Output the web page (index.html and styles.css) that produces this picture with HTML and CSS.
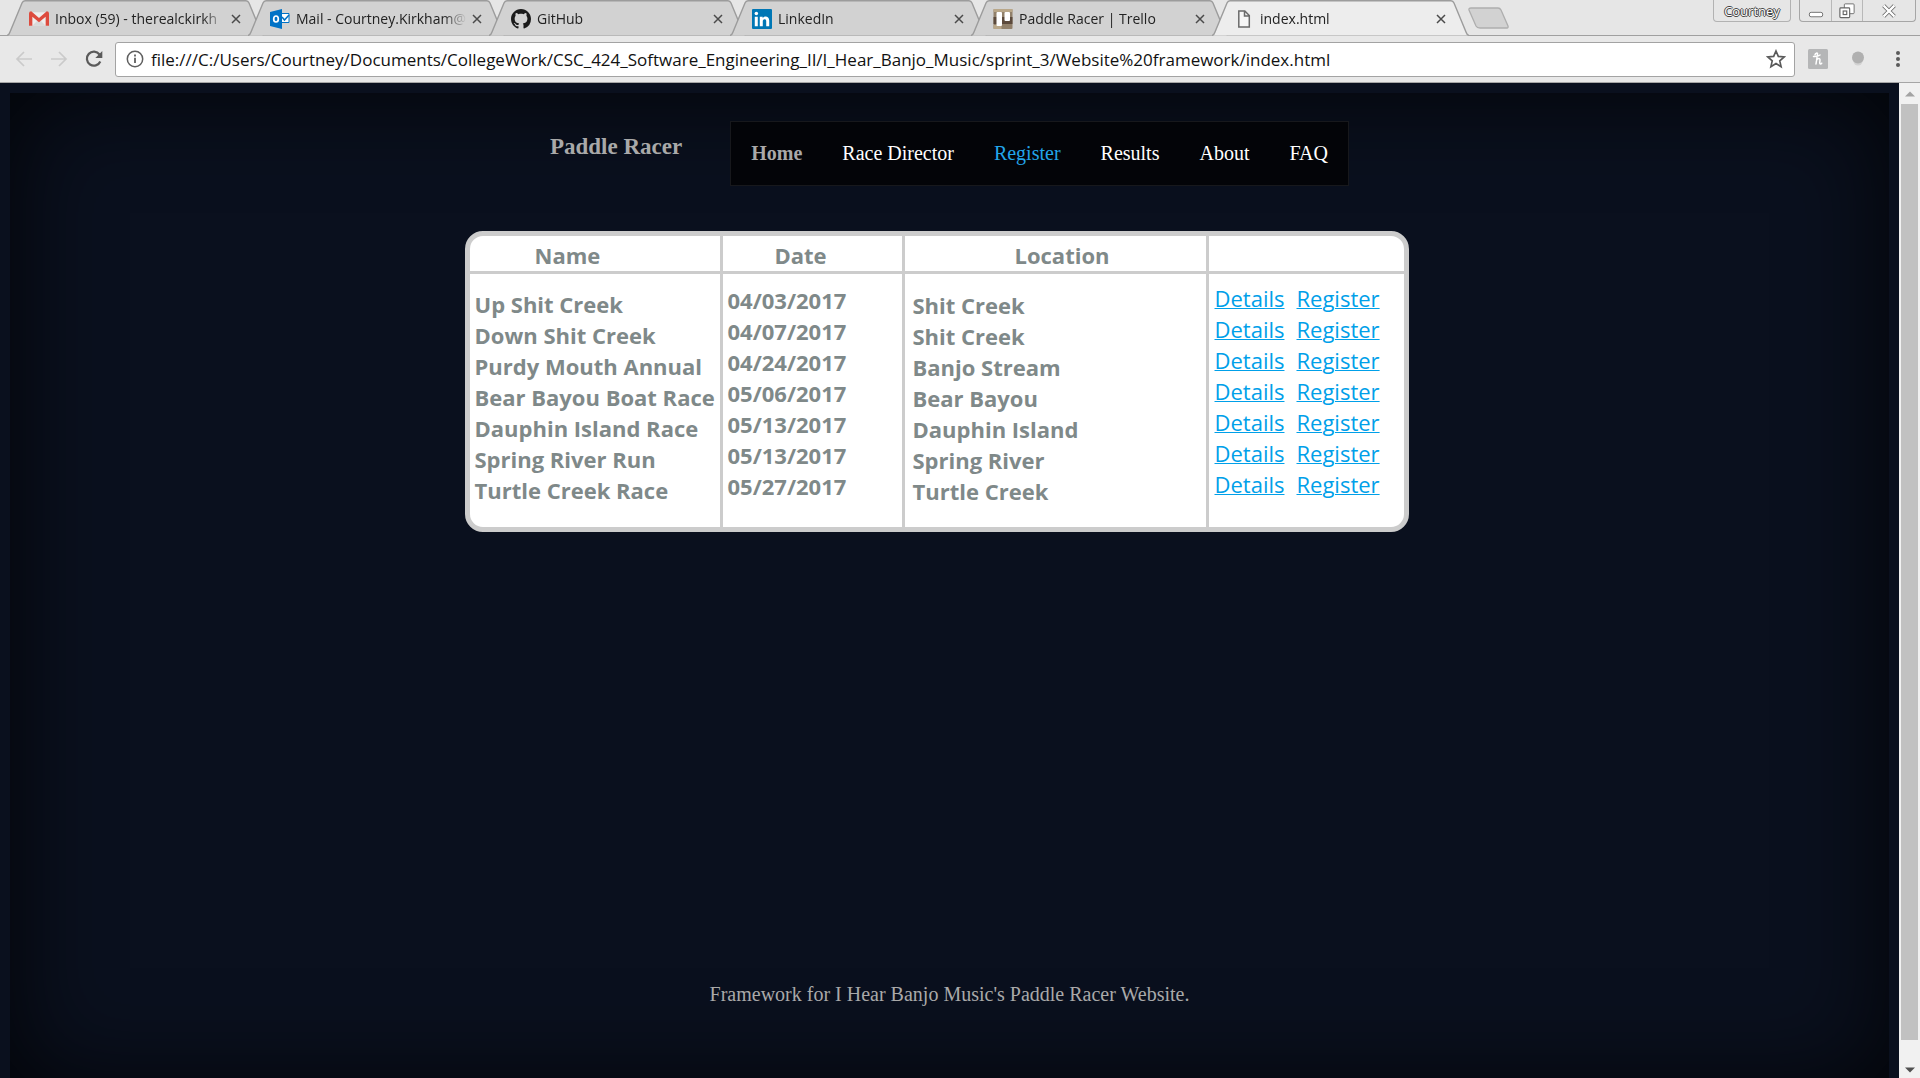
FILE: index.html
```html
<!DOCTYPE html>
<html lang="en">
<head>
<meta charset="utf-8">
<title>index.html</title>
<link rel="stylesheet" href="styles.css">
</head>
<body>
<svg class="defs" aria-hidden="true">
  <symbol id="tab-shape" viewBox="0 0 257 36" preserveAspectRatio="none">
    <path d="M0 35.5 Q2 35 3 32 L15 3 Q16 .7 18 .7 H239 Q241 .7 242 3 L254 32 Q255 35 257 35.5" stroke="#9c9c9c" stroke-width="1.4"/>
  </symbol>
  <symbol id="close" viewBox="0 0 10 10"><path d="M1 1l8 8M9 1L1 9" stroke="#4a4a4a" stroke-width="1.5"/></symbol>
</svg>

<header class="chrome">
  <div class="strip">
    <div class="tabs">
      <div class="tab">
        <svg class="shape"><use href="#tab-shape"/></svg>
        <svg class="icon" viewBox="0 0 18 18"><path fill="#eee" d="M1 3h16v12H1z"/><path fill="#d9d9d9" d="M3 15l6-6 6 6z"/><path fill="#dd4b3e" d="M0 4q0-2 2-2l7 6 7-6q2 0 2 2v11h-3V7l-6 5-6-5v8H0z"/></svg>
        <span class="title">Inbox (59) - therealckirkh</span>
        <button class="close" aria-label="Close tab"><svg><use href="#close"/></svg></button>
      </div>
      <div class="tab">
        <svg class="shape"><use href="#tab-shape"/></svg>
        <svg class="icon" viewBox="0 0 20 20"><path fill="#fff" stroke="#0072c6" d="M11 4.500h8v9h-8z"/><path d="M12 8l2.500 3L19 6" fill="none" stroke="#0072c6" stroke-width="1.500"/><path fill="#0072c6" d="M0 3l12-3v20L0 17z"/><ellipse cx="6" cy="10" rx="2.300" ry="3" fill="none" stroke="#fff" stroke-width="1.700"/></svg>
        <span class="title">Mail - Courtney.Kirkham@</span>
        <button class="close" aria-label="Close tab"><svg><use href="#close"/></svg></button>
      </div>
      <div class="tab">
        <svg class="shape"><use href="#tab-shape"/></svg>
        <svg class="icon" viewBox="0 0 16 16"><path fill="#1b1b1b" d="M8 0C3.580 0 0 3.580 0 8c0 3.540 2.290 6.530 5.470 7.590.4.070.55-.17.55-.38 0-.19-.01-.82-.01-1.490-2.010.37-2.530-.49-2.690-.94-.09-.23-.48-.94-.82-1.130-.28-.15-.68-.52-.01-.53.63-.01 1.080.58 1.230.82.72 1.210 1.870.87 2.330.66.07-.52.28-.87.51-1.070-1.780-.2-3.640-.89-3.640-3.950 0-.87.31-1.590.82-2.150-.08-.2-.36-1.020.08-2.120 0 0 .67-.21 2.200.82.64-.18 1.320-.27 2-.27s1.360.09 2 .27c1.530-1.040 2.200-.82 2.200-.82.44 1.100.16 1.920.08 2.120.51.56.82 1.270.82 2.150 0 3.070-1.870 3.750-3.650 3.950.29.25.54.73.54 1.480 0 1.070-.01 1.930-.01 2.200 0 .21.15.46.55.38A8 8 0 0 0 16 8c0-4.420-3.580-8-8-8z"/></svg>
        <span class="title">GitHub</span>
        <button class="close" aria-label="Close tab"><svg><use href="#close"/></svg></button>
      </div>
      <div class="tab">
        <svg class="shape"><use href="#tab-shape"/></svg>
        <svg class="icon" viewBox="0 0 18 18"><rect width="18" height="18" rx="1" fill="#0077b5"/><path fill="#fff" d="M2.500 7h2.700v8.500H2.500zM7 7h2.600v1.200c1.400-2.200 5.900-2 5.900 2.300v5h-2.700V11c0-2.500-3.100-2.300-3.100 0v4.500H7z"/><circle cx="3.900" cy="4" r="1.600" fill="#fff"/></svg>
        <span class="title">LinkedIn</span>
        <button class="close" aria-label="Close tab"><svg><use href="#close"/></svg></button>
      </div>
      <div class="tab">
        <svg class="shape"><use href="#tab-shape"/></svg>
        <svg class="icon" viewBox="0 0 19 20"><rect width="19" height="20" rx="1" fill="#91806a"/><path fill="#5c4a3c" d="M0 8h19v7H0z"/><path fill="#b9a789" d="M0 0h19v3H0zM0 16h8v4H0z"/><rect x="3" y="3" width="5.500" height="14" rx="1" fill="#fff"/><rect x="11" y="3" width="5.500" height="9" rx="1" fill="#fff"/></svg>
        <span class="title">Paddle Racer | Trello</span>
        <button class="close" aria-label="Close tab"><svg><use href="#close"/></svg></button>
      </div>
      <div class="tab active">
        <svg class="shape"><use href="#tab-shape"/></svg>
        <svg class="icon" viewBox="0 0 20 20"><path d="M4.800 2h6l4.500 4.500V18H4.800zM10.500 2v5h5" fill="#f6f6f6" stroke="#6a6a6a" stroke-width="1.500"/></svg>
        <span class="title">index.html</span>
        <button class="close" aria-label="Close tab"><svg><use href="#close"/></svg></button>
      </div>
      <button class="new-tab" aria-label="New tab"><svg viewBox="0 0 43 22"><path d="M4 1h27q2 0 3 2l7 16q.5 2-1 2H13q-3 0-4-2L2 3q-.500-2 2-2z" fill="#d2d2d2" stroke="#aeaeae" stroke-width="1.300"/></svg></button>
    </div>
    <div class="window-controls">
      <button class="profile">Courtney</button>
      <div class="control-group">
        <button class="control" aria-label="Minimize"><svg viewBox="0 0 18 18"><rect x="1.500" y="10.500" width="15" height="5" rx="2" fill="#fff" stroke="#666"/></svg></button>
        <button class="control" aria-label="Restore"><svg viewBox="0 0 18 18"><rect x="6" y="1" width="11" height="11" rx="1" fill="#fff" stroke="#666"/><rect x="1" y="5.500" width="11" height="11" rx="1" fill="#fff" stroke="#666" stroke-width="1.300"/><rect x="4.700" y="9" width="4" height="4" fill="#fff" stroke="#666" stroke-width="1.300"/></svg></button>
        <button class="control wide" aria-label="Close"><svg viewBox="0 0 18 18"><path d="M3 3l12 12M15 3L3 15" stroke="#666" stroke-width="4.500"/><path d="M3 3l12 12M15 3L3 15" stroke="#fff" stroke-width="2.600"/></svg></button>
      </div>
    </div>
  </div>

  <div class="toolbar">
    <button class="tool" aria-label="Back"><svg viewBox="0 0 18 18"><path d="M17 9H2M9 2L2 9l7 7" fill="none" stroke="#cacaca" stroke-width="1.700"/></svg></button>
    <button class="tool" aria-label="Forward"><svg viewBox="0 0 18 18"><path d="M1 9h15M9 2l7 7-7 7" fill="none" stroke="#cacaca" stroke-width="1.700"/></svg></button>
    <button class="tool" aria-label="Reload"><svg viewBox="0 0 18 18"><path d="M15.300 11.500A7 7 0 1 1 14.500 4.500" fill="none" stroke="#5a5a5a" stroke-width="2.200"/><path d="M17.300 1v7h-7z" fill="#5a5a5a"/></svg></button>
    <div class="omnibox">
      <svg class="info" viewBox="0 0 18 18"><circle cx="9" cy="9" r="7.700" fill="none" stroke="#5f5f5f" stroke-width="1.500"/><path d="M9 7.800v5.200M9 4.600v1.900" stroke="#5f5f5f" stroke-width="1.800"/></svg>
      <input class="url" type="text" aria-label="Address" value="file:///C:/Users/Courtney/Documents/CollegeWork/CSC_424_Software_Engineering_II/I_Hear_Banjo_Music/sprint_3/Website%20framework/index.html">
      <button class="star" aria-label="Bookmark"><svg viewBox="0 0 18 18"><path d="M9 1.800l2.100 4.900 5.300.5-4 3.500 1.200 5.200L9 13.100l-4.600 2.800 1.200-5.200-4-3.500 5.300-.5z" fill="none" stroke="#5a5a5a" stroke-width="1.500"/></svg></button>
    </div>
    <button class="tool ext" aria-label="Honey"><svg viewBox="0 0 20 20"><rect width="20" height="20" rx="1.500" fill="#b5b6b7"/><path d="M5.500 7.500c2.500.2 5-.4 6.500-1.500M8 15l1.500-10c.1-1.500-2.200-1-2.500.8M8.600 11c1.200-1.800 3.600-1.900 3.400 0l-.3 3c0 1.300 1.300 1.200 2 .2" fill="none" stroke="#fff" stroke-width="1.500" stroke-linecap="round"/></svg></button>
    <button class="tool ext" aria-label="Extension"><svg viewBox="0 0 20 20"><circle cx="10" cy="12" r="4.500" fill="#d2d2d2"/><circle cx="10" cy="8.500" r="6" fill="#b0b0b0"/></svg></button>
    <button class="tool ext" aria-label="Menu"><svg viewBox="0 0 20 20"><g fill="#5a5a5a"><circle cx="10" cy="4" r="2"/><circle cx="10" cy="10" r="2"/><circle cx="10" cy="16" r="2"/></g></svg></button>
  </div>
</header>

<div class="viewport">
  <div class="page">
    <div class="masthead">
      <h3 class="brand">Paddle Racer</h3>
      <nav class="menu">
        <a class="current" href="#">Home</a>
        <a href="#">Race Director</a>
        <a class="hovered" href="#">Register</a>
        <a href="#">Results</a>
        <a href="#">About</a>
        <a href="#">FAQ</a>
      </nav>
    </div>

    <main class="content">
      <table class="races">
        <thead>
          <tr><th class="name">Name</th><th class="date">Date</th><th class="place">Location</th><th class="links"></th></tr>
        </thead>
        <tbody>
          <tr><td class="name">Up Shit Creek</td><td class="date">04/03/2017</td><td class="place">Shit Creek</td><td class="links"><a href="#">Details</a><a href="#">Register</a></td></tr>
          <tr><td class="name">Down Shit Creek</td><td class="date">04/07/2017</td><td class="place">Shit Creek</td><td class="links"><a href="#">Details</a><a href="#">Register</a></td></tr>
          <tr><td class="name">Purdy Mouth Annual</td><td class="date">04/24/2017</td><td class="place">Banjo Stream</td><td class="links"><a href="#">Details</a><a href="#">Register</a></td></tr>
          <tr><td class="name">Bear Bayou Boat Race</td><td class="date">05/06/2017</td><td class="place">Bear Bayou</td><td class="links"><a href="#">Details</a><a href="#">Register</a></td></tr>
          <tr><td class="name">Dauphin Island Race</td><td class="date">05/13/2017</td><td class="place">Dauphin Island</td><td class="links"><a href="#">Details</a><a href="#">Register</a></td></tr>
          <tr><td class="name">Spring River Run</td><td class="date">05/13/2017</td><td class="place">Spring River</td><td class="links"><a href="#">Details</a><a href="#">Register</a></td></tr>
          <tr><td class="name">Turtle Creek Race</td><td class="date">05/27/2017</td><td class="place">Turtle Creek</td><td class="links"><a href="#">Details</a><a href="#">Register</a></td></tr>
        </tbody>
      </table>
    </main>

    <footer class="footer">Framework for I Hear Banjo Music's Paddle Racer Website.</footer>
  </div>
  <div class="scrollbar" aria-hidden="true">
    <svg viewBox="0 0 10 6"><path d="M0 5.500L5 .5l5 5z" fill="#a3a3a3"/></svg>
    <div class="thumb"></div>
    <svg viewBox="0 0 10 6"><path d="M0 .5l5 5 5-5z" fill="#505050"/></svg>
  </div>
</div>
</body>
</html>
```

FILE: styles.css
```css
* { box-sizing: border-box; }

body {
  margin: 0;
  height: 100vh;
  display: flex;
  flex-direction: column;
  overflow: hidden;
  background: #0a101e;
  font-family: "Open Sans", "Noto Sans", sans-serif;
}

button {
  display: flex;
  align-items: center;
  justify-content: center;
  padding: 0;
  border: 0;
  background: none;
  font: inherit;
}

.defs { display: none; }

/* Browser frame */
.chrome {
  flex: none;
  background: #e8e8e8;
  border-bottom: 1px solid #a6a6a6;
}

.strip {
  display: flex;
  justify-content: space-between;
  height: 36px;
  border-bottom: 1px solid #a0a0a0;
  background: #e6e6e6;
}

.tabs {
  display: flex;
  flex: 0 1 1530px;
  min-width: 0;
  padding-left: 7px;
}

.tab {
  position: relative;
  display: flex;
  align-items: center;
  flex: 0 1 241px;
  min-width: 0;
  height: 36px;
  padding: 2px 2px 0 22px;
}

.shape {
  position: absolute;
  top: 0;
  left: 0;
  width: calc(100% + 16px);
  height: 36px;
  fill: #d2d2d2;
}

.tab.active { z-index: 1; }
.tab.active .shape { fill: #ededed; }

.icon {
  position: relative;
  flex: none;
  width: 20px;
  height: 20px;
}

.title {
  position: relative;
  flex: 1;
  min-width: 0;
  margin-left: 6px;
  overflow: hidden;
  white-space: nowrap;
  font-size: 14px;
  line-height: 20px;
  color: #222;
  mask-image: linear-gradient(to left, transparent, #000 24px);
}

.close {
  position: relative;
  width: 20px;
  height: 20px;
}

.close svg { width: 10px; height: 10px; }

.new-tab {
  flex: none;
  height: 36px;
  margin-left: 14px;
}

.new-tab svg { width: 43px; height: 22px; }

.window-controls {
  display: flex;
  gap: 8px;
  padding-right: 4px;
}

.profile {
  width: 78px;
  height: 22px;
  border: 1px solid #b2b2b2;
  border-top: 0;
  border-radius: 0 0 4px 4px;
  color: #fff;
  font-size: 13px;
  text-shadow: 1px 0 #444, -1px 0 #444, 0 1px #444, 0 -1px #444;
}

.control-group {
  display: flex;
  height: 22px;
  border: 1px solid #a6a6a6;
  border-top: 0;
  border-radius: 0 0 4px 4px;
}

.control { width: 31px; }
.control + .control { border-left: 1px solid #b8b8b8; }
.control svg { width: 16px; height: 16px; }
.control.wide { width: 53px; }

.toolbar {
  display: flex;
  align-items: center;
  height: 46px;
  padding: 0 2px 0 6px;
}

.tool {
  flex: none;
  width: 35px;
  height: 34px;
}

.tool svg { width: 18px; height: 18px; }

.tool.ext { width: 40px; }
.tool.ext svg { width: 20px; height: 20px; }

.omnibox {
  display: flex;
  align-items: center;
  flex: 1;
  height: 35px;
  margin: 0 3px 0 4px;
  padding: 0 8px 0 10px;
  border: 1px solid #a3a3a3;
  border-radius: 3px;
  background: #fff;
}

.info { flex: none; width: 18px; height: 18px; }

.url {
  flex: 1;
  min-width: 0;
  margin-left: 7px;
  padding: 0;
  border: 0;
  outline: 0;
  background: none;
  color: #111;
  font-family: inherit;
  font-size: 17px;
}

.star svg { width: 20px; height: 20px; }

/* Page area */
.viewport {
  display: flex;
  flex: 1;
  min-height: 0;
}

.page {
  display: flex;
  flex-direction: column;
  flex: 1;
  margin: 10px 10px -10px;
  padding-top: 28px;
  box-shadow: inset 0 0 100px rgba(0, 0, 0, .8);
  color: #a9a9a9;
  font-family: "Liberation Serif", "Times New Roman", serif;
  font-size: 20px;
}

.masthead {
  display: flex;
  justify-content: center;
  gap: 48px;
}

.brand {
  margin: 13px 0 0;
  font-size: 23px;
  line-height: 26px;
}

.menu {
  display: flex;
  border: 1px solid #17181c;
  background: #030408;
}

.menu a {
  padding: 20px;
  color: #fff;
  line-height: 23px;
  text-decoration: none;
}

.menu .current { color: #a9a9a9; font-weight: bold; }
.menu .hovered { color: #22a5ea; }

.content {
  display: flex;
  justify-content: center;
  padding: 45px 26px 0 0;
}

.races {
  border: 5px solid #ccc;
  border-radius: 18px;
  border-spacing: 0;
  background: #fff;
  color: #7f8989;
  font-family: "Open Sans", "Noto Sans", sans-serif;
  font-size: 22px;
  font-weight: bold;
  line-height: 24px;
}

.races th {
  padding-top: 7px;
  padding-bottom: 4px;
  border-bottom: 3px solid #ccc;
  text-align: left;
}

.races th + th,
.races td + td { border-left: 3px solid #ccc; }

.races td {
  padding: calc(var(--drop) + var(--lead, 0px)) 0 0 5px;
  vertical-align: top;
  white-space: nowrap;
}

.races tbody tr:first-child { --lead: 12px; }
.races tbody tr:last-child td { padding-bottom: 24px; }

.races .name { --drop: 6px; width: 250px; }
.races .date { --drop: 2px; width: 182px; }
.races .place { --drop: 7px; width: 304px; }
.races .links { --drop: 0px; width: 198px; }

.races th.name { padding-left: 65px; }
.races th.date { padding-left: 52px; }
.races th.place { padding-left: 110px; }
.races td.place { padding-left: 8px; }
.races td.links { padding-left: 6px; font-weight: normal; }

.races a { color: #00a0e9; text-decoration-thickness: 1px; }
.races a + a { margin-left: 12px; }

.footer {
  margin-top: auto;
  padding-bottom: 82px;
  text-align: center;
  line-height: 24px;
}

.scrollbar {
  display: flex;
  flex-direction: column;
  align-items: center;
  width: 21px;
  padding: 8px 2px 5px;
  gap: 7px;
  background: #f1f1f1;
}

.scrollbar svg { width: 10px; height: 6px; }

.thumb {
  width: 17px;
  flex: 1;
  margin-bottom: 20px;
  background: #c1c1c1;
}
```
